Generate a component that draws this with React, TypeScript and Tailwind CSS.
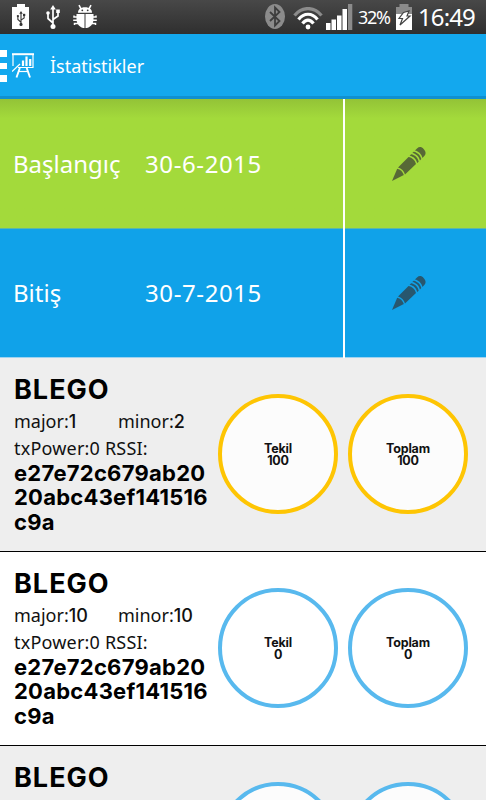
import type { ReactNode } from 'react'
import clsx from 'clsx'

type Beacon = {
  name: string
  major: number
  minor: number
  uuid: string
  single: number
  total: number
}

const uuid = 'e27e72c679ab2020abc43ef141516c9a'

const beacons: Beacon[] = [
  { name: 'BLEGO', major: 1, minor: 2, uuid, single: 100, total: 100 },
  { name: 'BLEGO', major: 10, minor: 10, uuid, single: 0, total: 0 },
  { name: 'BLEGO', major: 10, minor: 11, uuid, single: 0, total: 0 },
]

function UsbMark({ className }: { className: string }) {
  return (
    <svg viewBox="0 0 14 24" className={className} fill="none" stroke="currentColor" strokeWidth="1.7">
      <path d="M7 3v18M7 18l-5-4.5V8M7 14.5l5-3.500V6" />
      <path d="M7 0l2.800 4.500H4.200z" fill="currentColor" stroke="none" />
      <circle cx="7" cy="21.400" r="2.500" fill="currentColor" stroke="none" />
      <circle cx="2" cy="8" r="1.800" fill="currentColor" stroke="none" />
      <path d="M10.200 4.500h3.600v3.600h-3.600z" fill="currentColor" stroke="none" />
    </svg>
  )
}

function StatusBar() {
  return (
    <div className="flex h-[34px] shrink-0 items-start bg-linear-to-b from-[#484848] to-[#2f2f2f] text-white">
      <div className="ml-3 mt-1 flex h-[25px] w-[17px] flex-col items-center">
        <div className="h-[3px] w-[8px] bg-white" />
        <div className="flex w-full flex-1 items-center justify-center bg-white text-[#333]">
          <UsbMark className="h-[15px] w-[10px]" />
        </div>
      </div>
      <UsbMark className="ml-[17px] mt-[5px] h-6 w-[14px]" />
      <svg viewBox="0 0 24 25" className="ml-[13px] mt-1 h-[25px] w-6" fill="currentColor">
        <path d="M5 8.800C5 5.500 7.500 3.300 12 3.300s7 2.200 7 5.500z" />
        <path d="M8 4.800L6 1.200M16 4.800L18 1.200" stroke="currentColor" strokeWidth="1.600" />
        <circle cx="9.300" cy="6.300" r=".9" fill="#3d3d3d" />
        <circle cx="14.700" cy="6.300" r=".9" fill="#3d3d3d" />
        <path d="M3.500 10h17v5.200c0 5-3.500 8.800-8.500 8.800s-8.500-3.800-8.500-8.800z" />
        <path d="M12 10v14" stroke="#3d3d3d" strokeWidth="1" />
        <path d="M4 13H1v-1.500M4 16.300H.2M5 19.500H1.500V21M20 13h3v-1.500M20 16.300h3.800M19 19.500h3.500V21" fill="none" stroke="currentColor" strokeWidth="1.500" />
      </svg>

      <svg viewBox="0 0 20 26" className="ml-auto mt-1 h-[26px] w-5">
        <ellipse cx="10" cy="12.500" rx="10" ry="12.500" fill="#8b8b8b" />
        <path d="M5 8l9.500 9-4.500 4.500v-18l4.500 4.500L5 17" fill="none" stroke="#3d3d3d" strokeWidth="1.800" />
      </svg>
      <svg viewBox="0 0 30 23" className="ml-2 mt-[7px] h-[23px] w-[30px]" fill="none" strokeWidth="3.200">
        <path d="M1.500 8.500C9-.8 21-.8 28.500 8.500" stroke="#8b8b8b" />
        <path d="M5.500 12.500C11 5.500 19 5.500 24.500 12.500" stroke="#fff" />
        <path d="M9.500 16.500C13 12 17 12 20.500 16.500" stroke="#fff" />
        <circle cx="15" cy="20" r="2.400" fill="#fff" />
      </svg>
      <svg viewBox="0 0 27 26" className="ml-[3px] mt-1 h-[26px] w-[27px]" fill="#fff">
        <path d="M0 19h4.500v7H0zM5.500 15.500H10V26H5.500zM11 11.500h4.500V26H11zM16.500 5H21v21h-4.500z" />
        <path d="M22 0h4.300v26H22z" fill="#8b8b8b" />
      </svg>
      <span className="ml-[5px] mt-[4px] w-9 whitespace-nowrap font-['Noto_Sans',sans-serif] text-[18px] leading-[26px] tracking-[-1.3px]">32%</span>
      <svg viewBox="0 0 16 26" className="ml-[2px] mt-1 h-[26px] w-4">
        <path d="M3.500 0h9v3H16v8H0V3h3.500z" fill="#8b8b8b" />
        <path d="M0 10h16v16H0z" fill="#fff" />
        <path d="M7.500 8.500L13 7l-2 5h3L4 21l2.500-6.500H3z" fill="#fff" stroke="#444" strokeWidth="1.200" />
      </svg>
      <span className="ml-[6px] mr-2 w-[60px] whitespace-nowrap font-['Noto_Sans',sans-serif] text-[24px] leading-[34px] tracking-[-.9px]">16:49</span>
    </div>
  )
}

function TitleBar() {
  return (
    <header className="flex h-[65px] shrink-0 items-center border-b-[3px] border-[#1090d0] bg-[#13a8ee] text-white">
      <div className="mt-[2px] flex w-[7px] flex-col gap-[6px]">
        <div className="h-[6.500px] bg-white" />
        <div className="h-[6.500px] bg-white" />
        <div className="h-[6.500px] bg-white" />
      </div>
      <svg viewBox="0 0 22 25" className="ml-[5px] mt-px h-[25px] w-[22px]" fill="none" stroke="currentColor">
        <path d="M0 1.200h22" strokeWidth="2" />
        <path d="M1 2v11M21 2v12.500H6" strokeWidth="1.200" />
        <path d="M0 18.500l8-7.500" strokeWidth="1.200" />
        <path d="M11 13V7.500M14.500 13V3.500M18.200 13V6" strokeWidth="2.200" />
        <path d="M7.800 15L4.500 24.500M14.700 15L18 24.500" strokeWidth="1.900" />
        <path d="M7 18.500h9" strokeWidth="1.200" />
      </svg>
      <h1 className="ml-4 mt-[3px] font-['Noto_Sans',sans-serif] text-[18px]">İstatistikler</h1>
    </header>
  )
}

function PencilIcon() {
  return (
    <svg viewBox="0 0 34 34" className="h-[34px] w-[34px]" fill="#333" fillOpacity=".68">
      <path d="M0 34l5.200-12.200c3 .4 5.600 3 6.600 6.200z" />
      <path d="M6 20.500L16.500 10c3.600.5 6.600 3.200 7.500 7L13 27.600c-1-3.600-3.500-6.200-7-7.100z" />
      <path d="M17.600 8.700l1.500-1.500c3.800.6 6.900 3.600 7.600 7.500l-1.500 1.400c-.8-3.900-3.700-6.700-7.600-7.400z" />
      <path d="M20.300 6.100l1.400-1.400c3.800.6 6.900 3.700 7.600 7.400l-1.400 1.400c-.8-3.800-3.700-6.700-7.600-7.400z" />
      <path d="M22.900 3.500L25 1.400c2.300-2 4.600-1.600 6.600.5s2.800 4.700.9 6.900l-2.100 2.200c-.7-3.800-3.700-6.800-7.500-7.500z" />
    </svg>
  )
}

function DateRow({ label, date, className }: { label: string; date: string; className: string }) {
  return (
    <div className={clsx('flex shrink-0 border-b text-white', className)}>
      <div className="flex w-[343px] items-center pl-[13px] font-['Noto_Sans',sans-serif] text-[24px]">
        <span className="w-[132px]">{label}</span>
        <span className="tracking-[.6px]">{date}</span>
      </div>
      <div className="-mb-px w-[2px] bg-white" />
      <button className="flex flex-1 items-center justify-center pr-[13px]">
        <PencilIcon />
      </button>
    </div>
  )
}

function Counter({ active, children }: { active: boolean; children: ReactNode }) {
  return (
    <div
      className={clsx(
        'flex size-[120px] shrink-0 flex-col items-center justify-center rounded-full border-4 bg-white/80 pt-px text-[12.500px] font-bold leading-[12px] tracking-[-.2px] text-[#111]',
        active ? 'border-[#fec503]' : 'border-[#58b9ee]'
      )}
    >
      {children}
    </div>
  )
}

function BeaconRow({ beacon, className }: { beacon: Beacon; className: string }) {
  const active = beacon.total > 0
  return (
    <div className={clsx("flex h-[194px] shrink-0 border-b border-black pl-[14px] font-['Inter',sans-serif] text-black", className)}>
      <div className="w-[204px] pt-[17px]">
        <h2 className="text-[27px] font-bold leading-[30px] tracking-[1px]">{beacon.name}</h2>
        <div className="mt-[3px] flex font-['Noto_Sans',sans-serif] text-[18px] leading-[26px] text-[#111]">
          <span className="w-[104px]">major:<b className="font-['Inter',sans-serif] font-medium">{beacon.major}</b></span>
          <span>minor:<b className="font-['Inter',sans-serif] font-medium">{beacon.minor}</b></span>
        </div>
        <div className="font-['Noto_Sans',sans-serif] text-[18px] leading-[26px] tracking-[.2px] text-[#111]">txPower:0 RSSI:</div>
        <p className="w-[200px] break-all text-[22px] font-bold leading-[24.400px] tracking-[.25px]">{beacon.uuid}</p>
      </div>
      <div className="flex gap-[10px] pt-9">
        <Counter active={active}>
          <span>Tekil</span>
          <span>{beacon.single}</span>
        </Counter>
        <Counter active={active}>
          <span>Toplam</span>
          <span>{beacon.total}</span>
        </Counter>
      </div>
    </div>
  )
}

export default function App() {
  return (
    <div className="flex h-[800px] w-[486px] flex-col overflow-hidden bg-white">
      <StatusBar />
      <TitleBar />
      <DateRow label="Başlangıç" date="30-6-2015" className="h-[130px] border-[#5fb8a0] bg-linear-to-b from-[#93c337] via-[#a3da3b] via-15% to-[#a3da3b]" />
      <DateRow label="Bitiş" date="30-7-2015" className="h-[129px] border-[#9fd3f0] bg-[#10a2e9]" />
      {beacons.map((b, i) => (
        <BeaconRow key={i} beacon={b} className={i % 2 ? 'bg-white' : 'bg-[#eee]'} />
      ))}
    </div>
  )
}
